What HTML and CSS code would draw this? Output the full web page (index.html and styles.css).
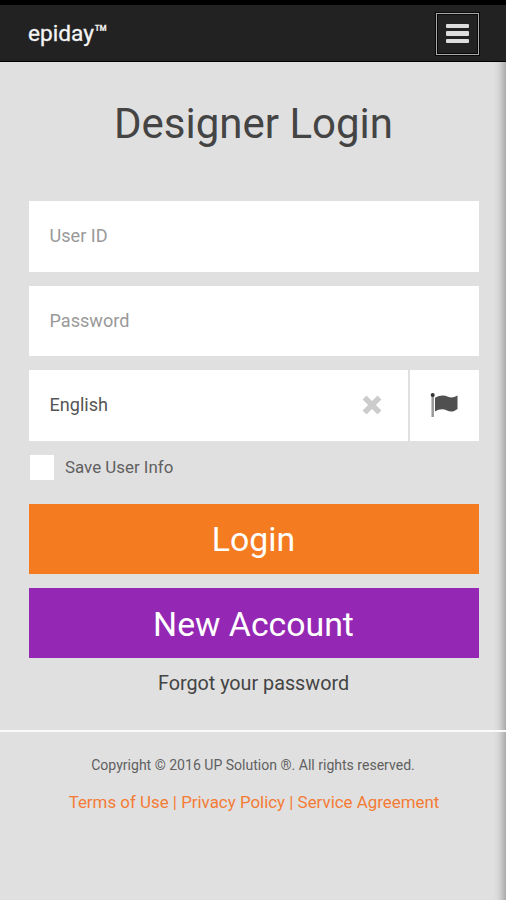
FILE: index.html
```html
<!DOCTYPE html>
<html lang="en">
<head>
<meta charset="utf-8">
<title>epiday</title>
<link rel="stylesheet" href="styles.css">
</head>
<body>
<header class="navbar">
  <span class="brand">epiday™</span>
  <button class="menu" aria-label="Menu"><span class="bar"></span><span class="bar"></span><span class="bar"></span></button>
</header>
<div class="page">
  <main class="content">
    <h1 class="title"><span>Designer Login</span></h1>
    <form class="form">
      <div class="field hint"><span>User ID</span></div>
      <div class="field hint"><span>Password</span></div>
      <div class="language">
        <div class="field select"><span>English</span>
          <svg class="clear" viewBox="0 0 20 20"><path d="M4.500 4.500 15.500 15.500M15.500 4.500 4.500 15.500"/></svg>
        </div>
        <div class="flag-box">
          <svg class="flag" viewBox="0 0 28 25"><path class="pole" d="M2.700 3V24"/><circle cx="2.700" cy="2" r="2"/><path class="cloth" d="M5 4.800C10 1.800 14 1.800 18 3.700C21 5 24 4.600 27.500 2.500V16C24 18.800 20.500 19.300 17 17.500C13 15.500 9 16 5 18.600Z"/></svg>
        </div>
      </div>
      <div class="remember"><span class="checkbox"></span><span class="save">Save User Info</span></div>
      <button type="button" class="btn login"><span>Login</span></button>
      <button type="button" class="btn account"><span>New Account</span></button>
      <div class="forgot"><span>Forgot your password</span></div>
    </form>
  </main>
  <footer class="footer">
    <div class="copyright"><span>Copyright © 2016 UP Solution ®. All rights reserved.</span></div>
    <div class="links"><span>Terms of Use | Privacy Policy | Service Agreement</span></div>
  </footer>
</div>
</body>
</html>
```
FILE: styles.css
```css
* { box-sizing: border-box; }
body {
  margin: 0;
  height: 900px;
  display: flex;
  flex-direction: column;
  overflow: hidden;
  background: #e0e0e0;
  color: #444;
  font-family: Roboto, "Liberation Sans", sans-serif;
}
.navbar {
  height: 62px;
  padding: 8px 27px 0 28px;
  border-top: 5px solid #000;
  border-bottom: 1px solid #000;
  background: #222;
  display: flex;
  justify-content: space-between;
}
.brand { color: #f4f4f4; font-size: 22.700px; line-height: 41px; -webkit-text-stroke: 0.300px #f4f4f4; }
.menu {
  width: 43px;
  height: 42px;
  margin: 0;
  padding: 0 0 1px;
  border: 1px solid #aaa;
  outline: 1px solid #080808;
  background: #222;
  box-shadow: inset 0 0 0 1px #080808;
  display: flex;
  flex-direction: column;
  align-items: center;
  justify-content: center;
  gap: 3px;
}
.bar { width: 23px; height: 4.500px; border-radius: 1px; background: #ddd; }
.page {
  flex: 1;
  background: linear-gradient(to left, #aaa 0, #c4c4c4 4px, #d8d8d8 8px, #e0e0e0 13px);
}
.content { height: 668px; padding: 29px 27.500px 0 28.500px; }
.title { margin: 0 0 44px; height: 66px; font-weight: 400; font-size: 42px; line-height: 66px; text-align: center; }
.form { display: flex; flex-direction: column; }
.field {
  height: 70.500px;
  margin-bottom: 14px;
  padding: 0 21px 1px;
  background: #fff;
  display: flex;
  align-items: center;
  font-size: 18.100px;
  color: #555;
}
.hint { color: #999; }
.language { display: flex; gap: 2px; margin-bottom: 14.500px; }
.select { flex: 1; margin: 0; justify-content: space-between; padding-right: 26px; padding-bottom: 2px; }
.clear { width: 20px; height: 20px; margin-top: 2px; fill: none; stroke: #ccc; stroke-width: 5.500; stroke-linecap: square; }
.flag-box { width: 68.500px; height: 70.500px; padding-right: 1px; background: #fff; display: flex; align-items: center; justify-content: center; }
.flag { width: 28px; height: 25px; fill: #333; }
.pole { stroke: #999; stroke-width: 2.500; }
.cloth { fill: #505050; }
.remember { height: 25px; display: flex; align-items: center; gap: 11px; padding-left: 1px; margin-bottom: 23.500px; font-size: 16.900px; color: #606060; }
.checkbox { width: 24.500px; height: 24.500px; background: #fff; }
.save { margin-top: -1px; }
.btn { height: 70px; margin: 0 0 14.500px; padding: 2px 0 0; border: 0; color: #fff; font-family: inherit; font-size: 33.800px; }
.login { background: #f47b20; }
.account { background: #9427b3; }
.forgot { margin-top: -2px; line-height: 26px; text-align: center; font-size: 19.750px; }
.footer { border-top: 2px solid #fafafa; padding-top: 22px; text-align: center; }
.copyright { line-height: 22px; font-size: 14.050px; color: #606060; }
.links { margin-top: 14px; padding-left: 2px; line-height: 24px; font-size: 16.900px; color: #f47b34; }
```
